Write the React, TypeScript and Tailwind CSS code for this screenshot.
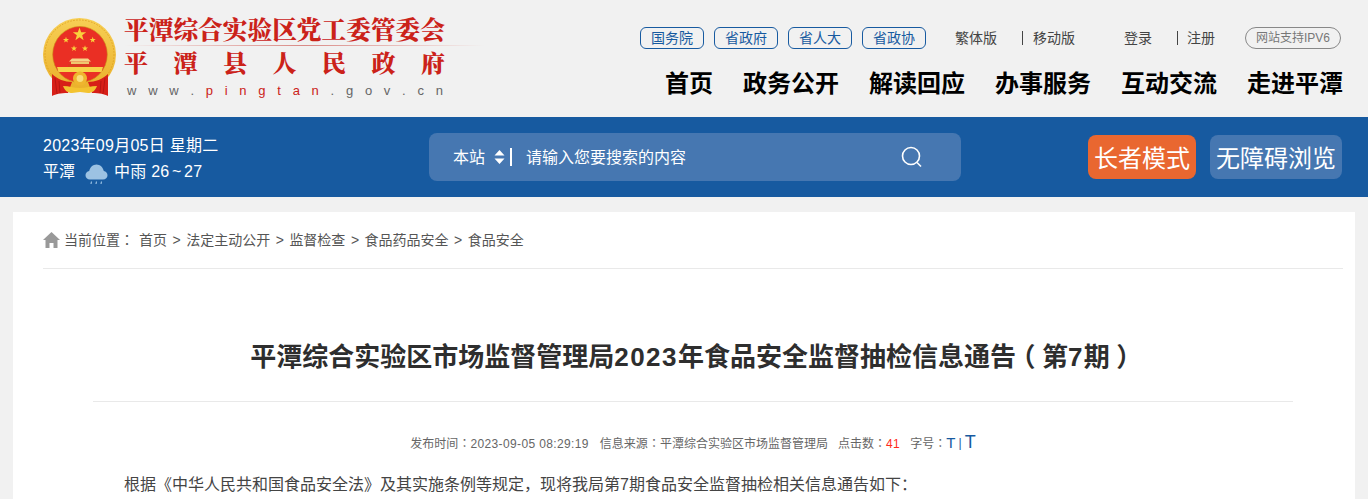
import React from "react";

const star = (cx: number, cy: number, r: number) => {
  const pts: string[] = [];
  for (let i = 0; i < 10; i++) {
    const rad = i % 2 === 0 ? r : r * 0.4;
    const a = -Math.PI / 2 + (i * Math.PI) / 5;
    pts.push(`${(cx + rad * Math.cos(a)).toFixed(2)},${(cy + rad * Math.sin(a)).toFixed(2)}`);
  }
  return pts.join(" ");
};

function Emblem() {
  return (
    <svg width="73" height="80" viewBox="13 7 73 80" className="shrink-0">
      <defs>
        <linearGradient id="gold" x1="0" y1="0" x2="0" y2="1">
          <stop offset="0" stopColor="#f7cf55" />
          <stop offset="1" stopColor="#eab02a" />
        </linearGradient>
      </defs>
      <ellipse cx="49.5" cy="44.500" rx="36.500" ry="36.500" fill="url(#gold)" />
      <ellipse cx="49.500" cy="44.500" rx="34.500" ry="34.500" fill="none" stroke="#dc9c1c" strokeWidth="0.8" strokeDasharray="1.5 1.5" />
      <ellipse cx="50" cy="44.500" rx="27.300" ry="28" fill="#ea2f24" stroke="#c98a18" strokeWidth="0.6" />
      <polygon points={star(49.5, 24.5, 7)} fill="#f9d23c" />
      <polygon points={star(36, 30, 3.2)} fill="#f9d23c" />
      <polygon points={star(62.7, 30, 3.2)} fill="#f9d23c" />
      <polygon points={star(44, 38.5, 3.2)} fill="#f9d23c" />
      <polygon points={star(55, 38.5, 3.2)} fill="#f9d23c" />
      <path d="M42 48.500h16l3 3H39z" fill="#f5d488" />
      <path d="M41 51.500h18v2.500H41z" fill="#efc66e" />
      <path d="M38 54h24v3H38z" fill="#d9391f" />
      <path d="M27 57h46l-1.500 5H28.500z" fill="#f8d24a" />
      <path d="M22 64c5 5 13 8 20 8l-4 11c-8 0-12 1-16 3z" fill="#d71f18" />
      <path d="M78 64c-5 5-13 8-20 8l4 11c8 0 12 1 16 3z" fill="#d71f18" />
      <path d="M25 68l2 16M29 71l1 12M75 68l-2 16M71 71l-1 12" stroke="#a9120e" strokeWidth="0.7" />
      <circle cx="50" cy="68.500" r="7" fill="#efb52e" />
      <circle cx="50" cy="68.500" r="3.400" fill="#f9dd7a" />
      <path d="M33 76c6 0 11 2 17 2s11-2 17-2c-2 5-5 7-9 7-3 0-5-1-8-1s-5 1-8 1c-4 0-7-2-9-7z" fill="#f3c330" />
    </svg>
  );
}

function Logo() {
  const serif = "font-['Noto_Serif_CJK_SC','Noto_Sans_CJK_SC',sans-serif]";
  return (
    <div className="flex items-start">
      <Emblem />
      <div className="ml-[8px] flex w-[360px] flex-col">
        <div className={`${serif} -mt-[2px] h-[28px] text-[24.7px] leading-[28px] font-black whitespace-nowrap text-[#cb2219]`}>
          平潭综合实验区党工委管委会
        </div>
        <div className="mt-[2px] h-[1px] w-[360px] bg-gradient-to-r from-[#f1f1f1] via-[#d98a86] to-[#f1f1f1]" />
        <div className={`${serif} flex w-[321px] justify-between text-[24px] leading-[32px] font-black text-[#cb2219]`}>
          {"平潭县人民政府".split("").map((c) => (
            <span key={c}>{c}</span>
          ))}
        </div>
        <div className="mt-[5px] flex w-[319px] justify-between pl-[3px] font-['Liberation_Sans',sans-serif] text-[13px] leading-[16px] text-[#666]">
          {"www.".split("").map((c, i) => (
            <span key={i}>{c}</span>
          ))}
          {"pingtan".split("").map((c, i) => (
            <span key={i} className="text-[#cb2219]">{c}</span>
          ))}
          {".gov.cn".split("").map((c, i) => (
            <span key={i}>{c}</span>
          ))}
        </div>
      </div>
    </div>
  );
}

function Pill({ children }: { children: React.ReactNode }) {
  return (
    <a className="flex h-[22px] w-[64px] items-center justify-center rounded-[6px] border border-[#175aa0] text-[14px] text-[#175aa0]">
      {children}
    </a>
  );
}

function RainIcon() {
  return (
    <svg width="23" height="21" viewBox="0 0 23 21" className="shrink-0">
      <path d="M5 15.500C2.400 15.500.5 13.700.5 11.300c0-2.100 1.500-3.800 3.700-4.200C5 3.300 8 .5 11.500.5s6.500 2.800 7.300 6.600c2.200.4 3.700 2.100 3.700 4.200 0 2.400-1.900 4.200-4.500 4.200z" fill="#9cc2e3" />
      <path d="M6.500 17.500L6 20M11.500 17.500L11 20M16.500 17.500L16 20" stroke="#9cc2e3" strokeWidth="1.2" />
    </svg>
  );
}

const Colon = () => <span className="font-['Noto_Sans_CJK_TC',sans-serif]">：</span>;

function Crumb() {
  return <span className="mx-[5.500px] font-['Liberation_Sans',sans-serif]">&gt;</span>;
}

export default function App() {
  return (
    <div className="h-[499px] overflow-hidden bg-[#f1f1f1] font-['Liberation_Sans','Noto_Sans_CJK_SC',sans-serif]">
      <header className="flex h-[117px] justify-between pr-[25px] pl-[43px]">
        <div className="pt-[17px]">
          <Logo />
        </div>
        <div className="flex flex-col items-end pt-[27px]">
          <div className="mr-[2px] flex h-[22px] items-center text-[14px] text-[#444]">
            <div className="flex gap-[10px]">
              <Pill>国务院</Pill>
              <Pill>省政府</Pill>
              <Pill>省人大</Pill>
              <Pill>省政协</Pill>
            </div>
            <span className="ml-[29px]">繁体版</span>
            <span className="mr-[10px] ml-[25px] h-[14px] w-px bg-[#444]" />
            <span>移动版</span>
            <span className="ml-[49px]">登录</span>
            <span className="mr-[9px] ml-[25px] h-[14px] w-px bg-[#444]" />
            <span>注册</span>
            <span className="ml-[30px] flex h-[22px] w-[96px] items-center justify-center rounded-full border border-[#888] text-[12px] text-[#777]">
              网站支持IPV6
            </span>
          </div>
          <nav className="mt-[21px] flex gap-[30px] text-[24px] leading-[28px] font-bold text-black">
            {["首页", "政务公开", "解读回应", "办事服务", "互动交流", "走进平潭"].map((t) => (
              <a key={t}>{t}</a>
            ))}
          </nav>
        </div>
      </header>

      <div className="flex h-[80px] items-center justify-between bg-[#175aa0] pr-[26px] pl-[43px] text-white">
        <div className="w-[386px] pt-[4px] text-[16px]">
          <div className="h-[26px] leading-[26px] tracking-[0.25px]">2023年09月05日 星期二</div>
          <div className="flex h-[26px] items-center leading-[26px]">
            <span>平潭</span>
            <span className="mr-[6px] ml-[10px] pt-[5px]"><RainIcon /></span>
            <span className="tracking-[0.25px]">中雨 26<span className="mx-[2.500px]">~</span>27</span>
          </div>
        </div>
        <div className="flex h-[48px] w-[532px] items-center rounded-[8px] bg-[#4677b1] pr-[38px] pl-[24px] text-[16px]">
          <span className="pt-[1px]">本站</span>
          <svg width="11" height="16" viewBox="0 0 11 16" className="ml-[9px]">
            <path d="M5.500 1L10.500 6.500H.5zM5.500 15L.5 9.500h10z" fill="#fff" />
          </svg>
          <span className="ml-[5px] h-[18px] w-[2px] bg-white" />
          <span className="ml-[14px] pt-[1px]">请输入您要搜索的内容</span>
          <svg width="22" height="22" viewBox="0 0 22 22" fill="none" className="ml-auto" stroke="#fff" strokeWidth="1.6">
            <circle cx="10" cy="10" r="8.500" />
            <path d="M16 16.500l4 4" />
          </svg>
        </div>
        <div className="ml-[127px] flex gap-[14px] text-[24px]">
          <a className="flex h-[44px] w-[108px] items-center justify-center rounded-[8px] bg-[#e96730] pt-[4px]">长者模式</a>
          <a className="flex h-[44px] w-[132px] items-center justify-center rounded-[8px] bg-[#4677b1] pt-[4px]">无障碍浏览</a>
        </div>
      </div>

      <main className="mx-[13px] mt-[15px] bg-white pr-[12px] pb-[20px] pl-[30px]">
        <div className="flex h-[57px] items-center border-b border-[#e9e9e9] text-[14px] text-[#555]">
          <svg width="17" height="16" viewBox="0 0 17 16" className="mr-[4px] shrink-0">
            <path d="M8.500 0L17 8h-2.500v8H10.500v-5h-4v5H2.500V8H0z" fill="#999" />
          </svg>
          <span>当前位置<Colon /></span>
          <span className="ml-[5px]">首页</span>
          <Crumb />
          <span>法定主动公开</span>
          <Crumb />
          <span>监督检查</span>
          <Crumb />
          <span>食品药品安全</span>
          <Crumb />
          <span>食品安全</span>
        </div>
        <div className="mx-[50px] border-b border-[#e9e9e9] pt-[71px] pb-[27px] text-center text-[26px] leading-[34px] font-bold text-[#2e2e2e]">
          平潭综合实验区市场监督管理局<span className="tracking-[1.500px]">2023</span>年食品安全监督抽检信息通告<span className="mx-[6.500px] font-['Noto_Sans_CJK_SC',sans-serif] leading-[20px] [font-feature-settings:'halt']">（</span>第<span className="tracking-[1.200px]">7</span>期<span className="mx-[6.500px] font-['Noto_Sans_CJK_SC',sans-serif] leading-[20px] [font-feature-settings:'halt']">）</span>
        </div>
        <div className="mt-[31px] flex h-[20px] items-center justify-center text-[12px] text-[#666]">
          <span>发布时间<Colon /><span className="tracking-[0.37px]">2023-09-05 08:29:19</span></span>
          <span className="ml-[11px]">信息来源<Colon />平潭综合实验区市场监督管理局</span>
          <span className="ml-[10px]">点击数<Colon /><span className="tracking-[0.5px] text-[#ff2a1a]">41</span></span>
          <span className="ml-[10px]">字号<Colon /></span>
          <span className="text-[15px] leading-[16px] text-[#175aa0]">T</span>
          <span className="mx-[3px] text-[#175aa0]">|</span>
          <span className="pb-[2px] text-[18px] leading-[16px] text-[#175aa0]">T</span>
        </div>
        <p className="mt-[20px] pl-[81px] text-[16px] leading-[24px] text-[#444]">
          根据《中华人民共和国食品安全法》及其实施条例等规定，现将我局第7期食品安全监督抽检相关信息通告如下：
        </p>
      </main>
    </div>
  );
}
